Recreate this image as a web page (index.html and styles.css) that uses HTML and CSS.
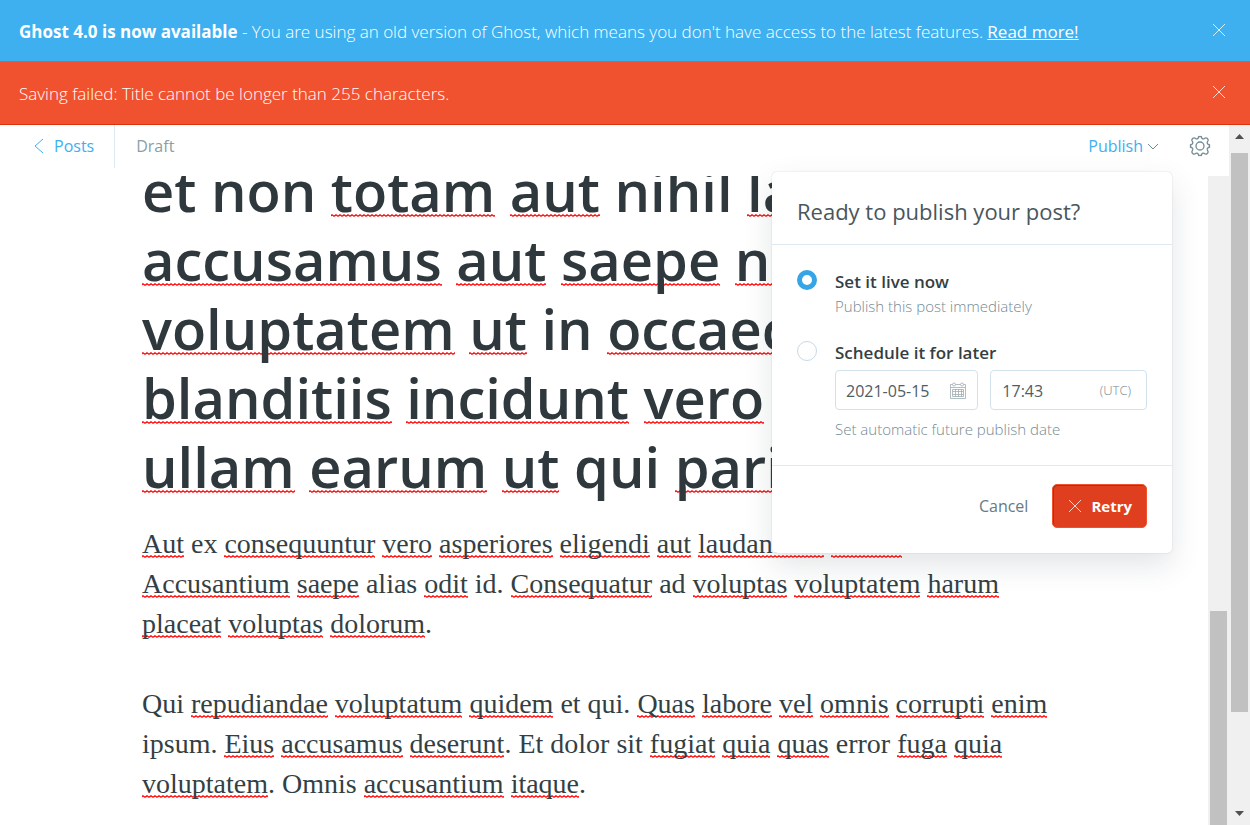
FILE: index.html
```html
<!DOCTYPE html>
<html lang="en">
<head>
<meta charset="utf-8">
<title>Ghost editor</title>
<link rel="stylesheet" href="styles.css">
</head>
<body>
<aside class="banner banner-info">
  <p class="banner-text"><b>Ghost 4.0 is now available</b> - You are using an old version of Ghost, which means you don't have access to the latest features. <a href="#">Read more!</a></p>
  <button class="banner-close" aria-label="Close"><svg viewBox="0 0 14 14" width="14" height="14"><path d="M1 1l12 12M13 1L1 13"/></svg></button>
</aside>
<aside class="banner banner-error">
  <p class="banner-text">Saving failed: Title cannot be longer than 255 characters.</p>
  <button class="banner-close" aria-label="Close"><svg viewBox="0 0 14 14" width="14" height="14"><path d="M1 1l12 12M13 1L1 13"/></svg></button>
</aside>
<div class="app">
  <main class="editor">
    <header class="toolbar">
      <a class="back" href="#"><svg viewBox="0 0 10 16" width="10" height="16"><path d="M9 1L1 8l8 7"/></svg>Posts</a>
      <span class="status">Draft</span>
      <div class="publish">
        <button class="publish-trigger">Publish<svg viewBox="0 0 12 8" width="12" height="8"><path d="M1 1l5 5 5-5"/></svg></button>
        <form class="menu">
          <h2 class="menu-title">Ready to publish your post?</h2>
          <div class="options">
            <input class="radio" type="radio" name="when" id="now" checked>
            <div class="option">
              <label class="option-name" for="now">Set it live now</label>
              <p class="hint">Publish this post immediately</p>
            </div>
            <input class="radio" type="radio" name="when" id="later">
            <div class="option">
              <label class="option-name" for="later">Schedule it for later</label>
              <div class="fields">
                <div class="field field-date">
                  <input type="text" value="2021-05-15" aria-label="Date">
                  <svg viewBox="0 0 16 17" width="16" height="17"><path d="M.5 2.500h2M5.500 2.500h5M13.500 2.500h2v14H.5v-14M.5 5.500h15M2.500 7.500h11v7h-11zM2.500 9.500h11M2.500 12.500h11M5.500 7v8M8.500 7v8M11.500 7v8"/><circle cx="4" cy="2.500" r="1.500"/><circle cx="12" cy="2.500" r="1.500"/></svg>
                </div>
                <div class="field field-time">
                  <input type="text" value="17:43" aria-label="Time">
                  <span class="zone">(UTC)</span>
                </div>
              </div>
              <p class="hint">Set automatic future publish date</p>
            </div>
          </div>
          <div class="actions">
            <button class="cancel" type="button">Cancel</button>
            <button class="retry" type="button"><svg viewBox="0 0 14 14" width="14" height="14"><path d="M1 1l12 12M13 1L1 13"/></svg>Retry</button>
          </div>
        </form>
      </div>
      <button class="settings" aria-label="Settings"><svg viewBox="0 0 22 22" width="22" height="22"><path d="M9.100 3.200L9.600 1.800Q9.900 1 10.700 1.700Q11 2.100 11.300 1.700Q12.100 1 12.400 1.800L12.900 3.200Q13.800 4.200 15.100 3.600L16.300 3Q17.300 2.600 18 3.300L18.700 4Q19.400 4.700 19 5.700L18.400 6.900Q17.800 8.200 18.800 9.100L20.200 9.600Q21 9.900 20.300 10.700Q19.900 11 20.300 11.300Q21 12.100 20.200 12.400L18.800 12.900Q17.800 13.800 18.400 15.100L19 16.300Q19.400 17.300 18.700 18L18 18.700Q17.300 19.400 16.300 19L15.100 18.400Q13.800 17.800 12.900 18.800L12.400 20.200Q12.100 21 11.300 20.300Q11 19.900 10.700 20.300Q9.900 21 9.600 20.200L9.100 18.800Q8.200 17.800 6.900 18.400L5.700 19Q4.700 19.400 4 18.700L3.300 18Q2.600 17.300 3 16.300L3.600 15.100Q4.200 13.800 3.200 12.900L1.800 12.400Q1 12.100 1.700 11.300Q2.100 11 1.700 10.700Q1 9.900 1.800 9.600L3.200 9.100Q4.200 8.200 3.600 6.900L3 5.700Q2.600 4.700 3.300 4L4 3.300Q4.700 2.600 5.700 3L6.900 3.600Q8.200 4.200 9.100 3.200Z"/><circle cx="11" cy="11" r="4"/></svg></button>
    </header>
    <div class="pane">
      <article class="post">
        <h1 class="post-title">et non <u>totam</u> <u>aut</u> nihil <u>laborum</u><br><u>accusamus</u> <u>aut</u> <u>saepe</u> <u>nesciunt</u><br><u>voluptatem</u> <u>ut</u> in <u>occaecati</u><br><u>blanditiis</u> <u>incidunt</u> <u>vero</u><br><u>ullam</u> <u>earum</u> <u>ut</u> qui <u>pariatur</u></h1>
        <p><u>Aut</u> ex <u>consequuntur</u> <u>vero</u> <u>asperiores</u> <u>eligendi</u> <u>aut</u> <u>laudantium</u> <u>beatae</u><br><u>Accusantium</u> <u>saepe</u> alias <u>odit</u> id. <u>Consequatur</u> ad <u>voluptas</u> <u>voluptatem</u> <u>harum</u><br><u>placeat</u> <u>voluptas</u> <u>dolorum</u>.</p>
        <p>Qui <u>repudiandae</u> <u>voluptatum</u> <u>quidem</u> et qui. <u>Quas</u> <u>labore</u> <u>vel</u> <u>omnis</u> <u>corrupti</u> <u>enim</u><br>ipsum. <u>Eius</u> <u>accusamus</u> <u>deserunt</u>. Et dolor sit <u>fugiat</u> <u>quia</u> <u>quas</u> error <u>fuga</u> <u>quia</u><br><u>voluptatem</u>. Omnis <u>accusantium</u> <u>itaque</u>.</p>
      </article>
      <div class="track track-pane"><div class="thumb"></div></div>
    </div>
  </main>
  <div class="track track-page">
    <svg viewBox="0 0 9 5" width="9" height="5"><path d="M0 5L4.500 0 9 5z"/></svg>
    <div class="thumb"></div>
    <svg viewBox="0 0 9 5" width="9" height="5"><path d="M0 0l4.500 5L9 0z"/></svg>
  </div>
</div>
</body>
</html>
```
FILE: styles.css
```css
* { box-sizing: border-box; }
body {
  margin: 0;
  height: 100vh;
  display: flex;
  flex-direction: column;
  overflow: hidden;
  background: #fff;
  color: #343f44;
  font: 16px/20px "Open Sans", "Noto Sans", sans-serif;
}
h1, h2, p { margin: 0; }
button { padding: 0; border: 0; background: none; font: inherit; cursor: pointer; }
svg { display: block; flex: none; fill: none; stroke: currentColor; }

.banner {
  flex: none;
  display: flex;
  align-items: flex-start;
  justify-content: space-between;
  padding: 19px 24px 17px 19px;
  color: #fff;
  font-size: 17px;
  line-height: 25px;
  font-weight: 300;
}
.banner-info { background: #3eb0ef; border-bottom: 1px solid #1f9fe5; }
.banner-error { background: #f05230; border-bottom: 1px solid #df320c; padding-bottom: 18px; }
.banner b { font-weight: 700; }
.banner a { color: #fff; font-weight: 400; }
.banner-close { margin-top: 4px; color: #fff; opacity: .8; }

.app { flex: 1; min-height: 0; display: flex; }
.editor { flex: 1; min-width: 0; display: flex; flex-direction: column; }

.toolbar {
  flex: none;
  display: flex;
  align-items: flex-start;
  height: 51px;
  padding: 0 18px 0 34px;
  line-height: 43px;
}
.back {
  display: flex;
  align-items: center;
  gap: 10px;
  padding-right: 20px;
  border-right: 1px solid #dfe9f1;
  color: #3eb0ef;
  text-decoration: none;
}
.back svg { margin-bottom: 2px; }
.status { padding-left: 21px; color: #8b9ea8; }
.publish { position: relative; margin-left: auto; }
.publish-trigger { display: flex; align-items: center; gap: 4px; color: #3eb0ef; line-height: 43px; }
.publish-trigger svg { color: #738a94; }
.settings { height: 42px; margin-left: 30px; color: #738a94; }
.settings svg { stroke-width: 1.300; }

.menu {
  position: absolute;
  z-index: 2;
  top: 47px;
  right: -13px;
  width: 400px;
  border-radius: 5px;
  background: #fff;
  box-shadow: 0 0 2px rgba(0, 0, 0, .14), 0 12px 30px rgba(50, 70, 80, .14);
  line-height: 20px;
}
.menu-title {
  padding: 25px 25px 19px;
  border-bottom: 1px solid #dfe9f1;
  font-size: 22px;
  line-height: 28px;
  font-weight: 400;
  color: #4a565c;
}
.options {
  display: grid;
  grid-template-columns: 20px minmax(0, 1fr);
  column-gap: 18px;
  row-gap: 24px;
  padding: 25px 25px 25px;
}
.radio {
  appearance: none;
  width: 20px;
  height: 20px;
  margin: 0;
  border: 1px solid #c5d9e8;
  border-radius: 50%;
  background: #fff;
}
.radio:checked { border: 5px solid #35a5e5; }
.option-name { display: block; font-size: 17px; line-height: 24px; font-weight: 600; }
.hint { padding-top: 1px; font-size: 15px; line-height: 22px; font-weight: 300; color: #738a94; }
.fields { display: flex; gap: 12px; padding: 5px 0 7px; }
.field {
  min-width: 0;
  display: flex;
  align-items: center;
  height: 40px;
  padding: 0 11px;
  border: 1px solid #d2e2ec;
  border-radius: 4px;
}
.field-date { flex: 145 0 0; padding-left: 10px; }
.field-time { flex: 155 0 0; padding-right: 15px; }
.field input {
  flex: 1;
  min-width: 0;
  padding: 2px 0 0;
  border: 0;
  outline: 0;
  background: none;
  color: #4f5d64;
  font: 16px/20px "Open Sans", "Noto Sans", sans-serif;
}
.field svg { color: #9fadb4; stroke-width: .8; }
.zone { font-size: 13px; font-weight: 300; color: #738a94; }
.actions {
  display: flex;
  align-items: center;
  justify-content: flex-end;
  gap: 24px;
  padding: 18px 25px 25px;
  border-top: 1px solid #dfe9f1;
}
.cancel { color: #667a83; }
.retry {
  display: flex;
  align-items: center;
  gap: 9px;
  height: 44px;
  padding: 0 14px 0 15px;
  border: 1px solid #f05230;
  border-radius: 5px;
  background: #df3f1e;
  box-shadow: inset 1px 1px 0 #b3300f;
  color: #fff;
  font-size: 15px;
  font-weight: 700;
}
.retry svg { stroke-width: .8; }

.pane { flex: 1; min-height: 0; display: flex; overflow: hidden; }
.post {
  flex: 1;
  max-width: 924px;
  margin: -20px auto 0;
  white-space: nowrap;
  font-family: "Liberation Serif", serif;
  font-size: 28px;
  line-height: 40px;
}
.post p { margin-bottom: 40px; }
.post-title {
  margin-bottom: 23px;
  font: 600 56px/69px "Open Sans", "Noto Sans", sans-serif;
  color: #2f383c;
}
.post u {
  text-decoration: none;
  background: url("data:image/svg+xml,%3Csvg xmlns='http://www.w3.org/2000/svg' width='4' height='3'%3E%3Cpath d='M-1 2.500L1 .8L3 2.200L5 .8' fill='none' stroke='%23f00' stroke-width='1.200'/%3E%3C/svg%3E") repeat-x left bottom 1px;
}
.post .post-title u { background-position: left 0 bottom 11px; }

.track { flex: none; width: 21px; background: #f0f0f0; }
.thumb { width: 17px; background: #c1c1c1; }
.track-pane { display: flex; justify-content: flex-start; align-items: flex-end; padding: 0 2px; }
.track-pane .thumb { height: 33%; }
.track-page { display: flex; flex-direction: column; align-items: center; padding: 9px 0 9px; gap: 14px; }
.track-page .thumb { height: 82%; }
.track-page svg { fill: #505050; stroke: none; }
.track-page svg:last-child { margin-top: auto; }
```
